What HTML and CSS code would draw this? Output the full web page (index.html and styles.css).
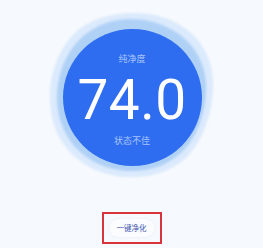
FILE: index.html
```html
<!DOCTYPE html>
<html lang="zh">
<head>
<meta charset="utf-8">
<link rel="stylesheet" href="styles.css">
</head>
<body>
<div class="page">
  <div class="gauge">
    <svg class="halo" width="263" height="200" viewBox="0 0 263 200">
      <defs>
        <filter id="soft" x="-20%" y="-20%" width="140%" height="140%">
          <feGaussianBlur stdDeviation="1.1"/>
        </filter>
      </defs>
      <path filter="url(#soft)" fill="#dbeafc" d="M130 13 C158 12 182 22 196 38 C210 54 214 72 213 90 C212 112 204 140 186 158 C168 174 146 178 126 177 C104 176 82 166 68 150 C54 134 49 112 50 92 C51 70 60 46 78 30 C94 18 110 14 130 13 Z"/>
      <path filter="url(#soft)" fill="#b0d1f6" d="M131 19 C156 19 178 30 191 45 C203 60 207 76 206 92 C205 114 197 138 181 153 C165 167 146 172 128 171 C107 170 88 161 75 147 C62 132 56 113 57 94 C58 73 66 52 82 37 C96 25 112 19 131 19 Z"/>
    </svg>
    <div class="disc">
      <div class="label">纯净度</div>
      <div class="value">74.0</div>
      <div class="label status">状态不佳</div>
    </div>
  </div>
  <div class="action">
    <button class="btn">一键净化</button>
  </div>
</div>
</body>
</html>
```
FILE: styles.css
```css
html, body {
  margin: 0;
  padding: 0;
  background: #f6f9fd;
  font-family: "Noto Sans CJK SC", Roboto, sans-serif;
}
.page {
  width: 263px;
  height: 248px;
  display: flex;
  flex-direction: column;
  align-items: center;
  overflow: hidden;
}
.gauge {
  position: relative;
  width: 263px;
  height: 212px;
  display: flex;
  justify-content: center;
  padding-top: 29px;
  box-sizing: border-box;
}
.halo {
  position: absolute;
  left: 0;
  top: 0;
}
.disc {
  position: relative;
  width: 139px;
  height: 137px;
  border-radius: 50%;
  background: #2e6cf0;
  display: flex;
  flex-direction: column;
  align-items: center;
  box-sizing: border-box;
  padding-top: 24px;
  margin-left: 1px;
}
.label {
  font-size: 9px;
  line-height: 12px;
  color: #a9c6fb;
}
.value {
  font-family: Roboto, "Liberation Sans", sans-serif;
  font-weight: 400;
  font-size: 55px;
  line-height: 50px;
  color: #ffffff;
  margin-top: 10px;
  letter-spacing: 0.5px;
}
.status {
  margin-top: 10px;
}
.action {
  width: 60px;
  height: 32px;
  border: 2px solid #d8343c;
  box-sizing: border-box;
  display: flex;
  align-items: center;
  justify-content: center;
}
.btn {
  border: none;
  background: #fbfcfe;
  border-radius: 12px;
  padding: 4px 8px;
  font-family: "Noto Sans CJK SC", sans-serif;
  font-size: 7.5px;
  line-height: 10px;
  color: #4256b0;
  box-shadow: 0 0 2px rgba(120,140,180,0.15);
}
```
